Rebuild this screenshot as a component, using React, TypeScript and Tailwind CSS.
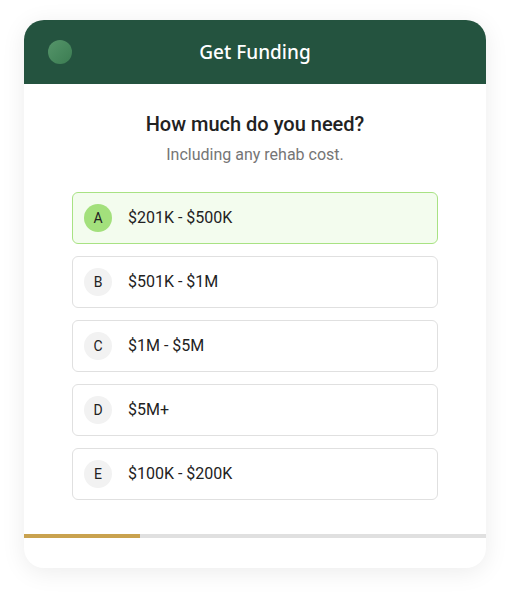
import React from "react";

const options = [
  { letter: "A", label: "$201K - $500K", selected: true },
  { letter: "B", label: "$501K - $1M", selected: false },
  { letter: "C", label: "$1M - $5M", selected: false },
  { letter: "D", label: "$5M+", selected: false },
  { letter: "E", label: "$100K - $200K", selected: false },
];

export default function App() {
  return (
    <div className="min-h-[596px] w-[510px] bg-white pt-[20px] pl-[24px]" style={{ fontFamily: "Roboto, 'Noto Sans', sans-serif" }}>
      <div className="w-[462px] h-[548px] rounded-[20px] bg-white shadow-[0_4px_24px_rgba(0,0,0,0.08)] overflow-hidden flex flex-col">
        <div className="h-[64px] bg-[#24533f] grid grid-cols-[1fr_auto_1fr] items-center">
          <div className="pl-[24px]">
            <div className="w-[24px] h-[24px] rounded-full bg-[linear-gradient(135deg,#55956a,#3b7c52)]" />
          </div>
          <div className="text-white text-[19px] font-medium leading-[28px]" style={{ fontFamily: "'Noto Sans', 'Open Sans', sans-serif" }}>
            Get Funding
          </div>
          <div />
        </div>
        <div className="flex flex-col items-center pt-[26px]">
          <div className="text-[20px] leading-[28px] font-medium text-[#222222]">How much do you need?</div>
          <div className="mt-[5px] text-[16px] leading-[24px] text-[#757575]">Including any rehab cost.</div>
        </div>
        <div className="mt-[25px] px-[48px] flex flex-col gap-[12px]">
          {options.map((o) => (
            <div
              key={o.letter}
              className={
                o.selected
                  ? "h-[52px] rounded-[6px] border-[1.5px] border-[#a8e283] bg-[#f3fcee] flex items-center pl-[11px]"
                  : "h-[52px] rounded-[6px] border-[1.5px] border-[#e0e0e0] bg-white flex items-center pl-[11px]"
              }
            >
              <div
                className={
                  o.selected
                    ? "w-[28px] h-[28px] rounded-full bg-[#a3e07c] flex items-center justify-center text-[14px] text-[#222222]"
                    : "w-[28px] h-[28px] rounded-full bg-[#f2f2f2] flex items-center justify-center text-[14px] text-[#222222]"
                }
              >
                {o.letter}
              </div>
              <div className="ml-[16px] text-[16px] text-[#222222]">{o.label}</div>
            </div>
          ))}
        </div>
        <div className="mt-[34px] h-[4px] bg-[#e0e0e0] flex">
          <div className="w-[116px] h-[4px] bg-[#c9a24f]" />
        </div>
      </div>
    </div>
  );
}
